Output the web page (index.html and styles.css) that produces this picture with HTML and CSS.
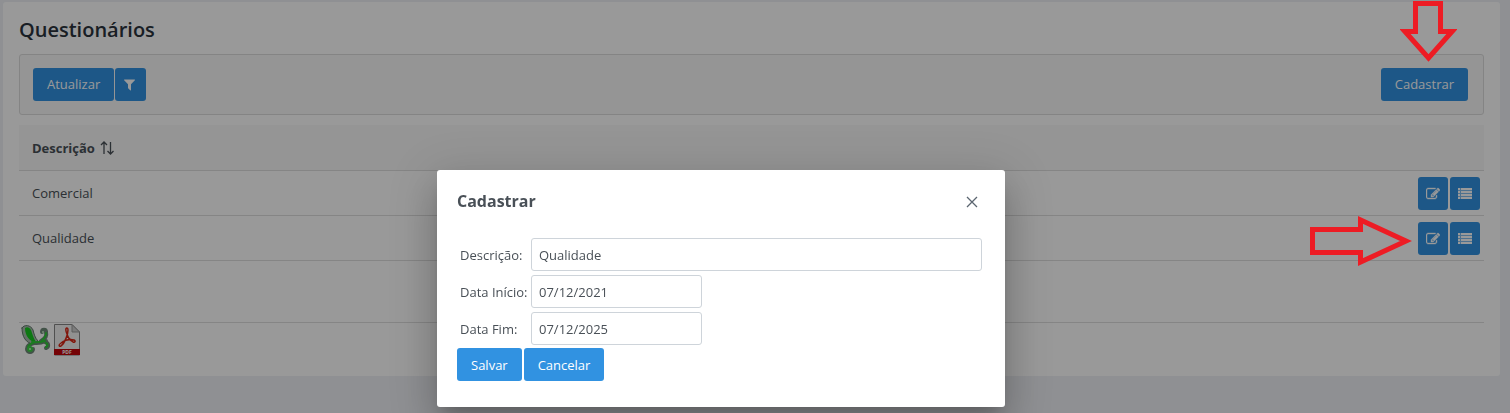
FILE: index.html
```html
<!DOCTYPE html>
<html lang="pt-BR">
<head>
<meta charset="utf-8">
<title>Questionários</title>
<link rel="stylesheet" href="styles.css">
</head>
<body>
<svg class="defs" aria-hidden="true">
  <symbol id="i-edit" viewBox="0 0 1792 1792"><path d="M888 1184l116-116-152-152-116 116v56h96v96h56zm440-720q-16-16-33 1l-350 350q-17 17-1 33t33-1l350-350q17-17 1-33zm80 594v190q0 119-84.500 203.500t-203.500 84.500h-832q-119 0-203.500-84.500t-84.500-203.500v-832q0-119 84.500-203.500t203.500-84.500h832q63 0 117 25 15 7 18 23 3 17-9 29l-49 49q-14 14-32 8-23-6-45-6h-832q-66 0-113 47t-47 113v832q0 66 47 113t113 47h832q66 0 113-47t47-113v-126q0-13 9-22l64-64q15-15 35-7t20 29zm-96-738l288 288-672 672h-288v-288zm444 132l-92 92-288-288 92-92q28-28 68-28t68 28l152 152q28 28 28 68t-28 68z" stroke="#fff" stroke-width="50"/></symbol>
  <symbol id="i-list" viewBox="0 0 14 14"><path d="M0 1h2v2H0zM3 1h11v2H3zM0 4h2v2H0zM3 4h11v2H3zM0 7h2v2H0zM3 7h11v2H3zM0 10h2v2H0zM3 10h11v2H3z"/><path d="M0 1h14v11H0z" opacity=".4"/></symbol>
</svg>

<main class="card">
  <h1 class="page-title">Questionários</h1>
  <div class="toolbar">
    <div class="toolbar-group">
      <button class="btn" type="button">Atualizar</button>
      <button class="btn btn-icon" type="button" aria-label="Filtrar"><svg class="icon" viewBox="192 64 1792 1792"><path d="M1595 295q17 41-14 70l-493 493v742q0 42-39 59-13 5-25 5-27 0-45-19l-256-256q-19-19-19-45v-486l-493-493q-31-29-14-70 17-39 59-39h1280q42 0 59 39z"/></svg></button>
    </div>
    <button class="btn" type="button">Cadastrar</button>
  </div>

  <table class="data">
    <thead>
      <tr>
        <th scope="col"><span class="sort">Descrição
          <svg class="sort-icon" viewBox="0 0 14 14"><path d="M4 13V1M1 4l3-3 3 3M10.500 1v12M7.500 10l3 3 3-3"/></svg></span></th>
        <td></td>
      </tr>
    </thead>
    <tbody>
      <tr>
        <td>Comercial</td>
        <td class="actions-cell"><div class="actions">
          <button class="btn btn-icon" type="button" aria-label="Editar Comercial"><svg class="icon"><use href="#i-edit"/></svg></button>
          <button class="btn btn-icon" type="button" aria-label="Itens de Comercial"><svg class="icon"><use href="#i-list"/></svg></button>
        </div></td>
      </tr>
      <tr>
        <td>Qualidade</td>
        <td class="actions-cell"><div class="actions">
          <button class="btn btn-icon" type="button" aria-label="Editar Qualidade"><svg class="icon"><use href="#i-edit"/></svg></button>
          <button class="btn btn-icon" type="button" aria-label="Itens de Qualidade"><svg class="icon"><use href="#i-list"/></svg></button>
        </div></td>
      </tr>
    </tbody>
  </table>
  <div class="paginator"></div>

  <div class="exports">
    <a href="#" aria-label="Exportar Excel"><svg class="export-icon" viewBox="0 0 32 34">
      <g fill="none" stroke-linecap="round" stroke-linejoin="round">
        <path d="M12 19c5 2 10 1 15-1M22 18c4-2 6-5 5-9 0-3-4-3-4 0M26 19c4 1 4 5 1 6M15 20c-4 1-7 3-7 6 0 4 6 4 6 0" stroke="#6f8a79" stroke-width="4"/>
        <path d="M3 5c2-4 9-3 11 2 1 4 2 8 5 11l-5 3C7 20 3 14 3 5z" fill="#a9bdb0" stroke="#5f7a6a"/>
        <path d="M6 5c3-2 6 0 7 5 1 3 2 6 4 9-6 0-11-6-11-14z" fill="#16c81e"/>
        <path d="M13 19c5 1 9 0 13-1M23 17c3-2 4-4 4-7M27 20c2 1 2 3 0 4M14 20c-3 1-5 3-5 5" stroke="#2fcb38" stroke-width="2"/>
        <circle cx="11" cy="26" r="3" fill="#3ed247"/><circle cx="24" cy="9" r="1" fill="#c2e6c5"/>
        <circle cx="11" cy="26" r="1" fill="#c9f2cb"/>
      </g></svg></a>
    <a href="#" aria-label="Exportar PDF"><svg class="export-icon" viewBox="0 0 32 34">
      <path d="M2.500 1.500H20l7.500 7.500v23h-25z" fill="#f2f2f2" stroke="#858585"/>
      <path d="M20 1.500V9h7.500z" fill="#cfcfcf" stroke="#9a9a9a"/>
      <path d="M2 26h26v6H2z" fill="#c4060b"/>
      <path d="M15 5c-2 0-1 4 0 6 1 4 3 6 6 8 2 1 3-1 1-2-4-1-9 0-13 3-3 2-2 4 0 3 4-3 7-12 7-16 0-1 0-2-1-2z" fill="none" stroke="#d82514" stroke-width="1.500"/>
      <text class="pdf-label" x="15" y="31" text-anchor="middle">PDF</text></svg></a>
  </div>
</main>

<div class="overlay"></div>

<section class="dialog" role="dialog" aria-labelledby="dialog-title">
  <header class="dialog-head">
    <h2 class="dialog-title" id="dialog-title">Cadastrar</h2>
    <button class="close" type="button" aria-label="Fechar"><svg class="close-icon" viewBox="0 0 12 12"><path d="M1 1l10 10M11 1L1 11"/></svg></button>
  </header>
  <form>
    <div class="fields">
      <label for="descricao">Descrição:</label>
      <input class="field" id="descricao" type="text" value="Qualidade">
      <label for="inicio">Data Início:</label>
      <input class="field field-date" id="inicio" type="text" value="07/12/2021">
      <label for="fim">Data Fim:</label>
      <input class="field field-date" id="fim" type="text" value="07/12/2025">
    </div>
    <div class="form-actions">
      <button class="btn" type="button">Salvar</button>
      <button class="btn" type="button">Cancelar</button>
    </div>
  </form>
</section>

<svg class="arrow arrow-down" viewBox="0 0 57 63" aria-hidden="true"><path d="M15.500 3.500h25v28H52L28.500 58 5 31.500h10.500z"/></svg>
<svg class="arrow arrow-right" viewBox="0 0 103 52" aria-hidden="true"><path d="M3.500 14.500h48V5L97 26 51.500 47V37.500h-48z"/></svg>
</body>
</html>
```
FILE: styles.css
```css
* { box-sizing: border-box; }

body {
  margin: 0;
  min-height: 100vh;
  padding: 2px 10px 0 3px;
  overflow: hidden;
  position: relative;
  background: #eef1f6;
  color: #495057;
  font: 13px/18px "Open Sans", "Noto Sans", sans-serif;
}

.defs { position: absolute; width: 0; height: 0; }

.card {
  padding: 16px 16px 19px;
  background: #fff;
  border-radius: 3px;
}

.page-title {
  margin: 0 0 12px;
  color: #2b333c;
  font-size: 20px;
  line-height: 24px;
  font-weight: 600;
}

.toolbar {
  display: flex;
  justify-content: space-between;
  align-items: center;
  margin-bottom: 10px;
  padding: 13px 15px 13px 13px;
  background: #f8f8f8;
  border: 1px solid #dcdcdc;
  border-radius: 3px;
}

.toolbar-group { display: flex; gap: 1px; }

.btn {
  display: inline-flex;
  align-items: center;
  justify-content: center;
  height: 33px;
  padding: 0 14px 1px;
  border: 0;
  border-radius: 3px;
  background: #3192e1;
  color: #fff;
  font: inherit;
}

.btn-icon { width: 31px; padding: 0; }

.icon { width: 14px; height: 14px; fill: #fff; }

.data { width: 100%; border-collapse: collapse; }

.data th,
.data td {
  height: 45px;
  padding: 0 4px 0 13px;
  border-bottom: 1px solid #dedede;
  text-align: left;
}

.data thead { background: #f8f8f8; }

.data th { padding-top: 2px; font-weight: 700; }

.data .actions-cell { padding-top: 2px; }

.sort { display: flex; align-items: center; gap: 5px; }

.sort-icon {
  width: 14px;
  height: 14px;
  fill: none;
  stroke: #495057;
  stroke-width: 1.300;
}

.actions { display: flex; justify-content: flex-end; gap: 2px; }

.actions .btn { width: 30px; }

.paginator { height: 62px; border-bottom: 1px solid #dedede; }

.exports { display: flex; gap: 1px; }

.exports a { display: flex; }

.export-icon { width: 32px; height: 34px; }

.pdf-label { fill: #fff; font-size: 5px; font-weight: 700; }

.overlay { position: fixed; inset: 0; background: rgba(0, 0, 0, 0.4); }

.dialog {
  position: absolute;
  top: 170px;
  left: 437px;
  width: 568px;
  padding: 19px 20px 26px;
  background: #fff;
  border-radius: 3px;
  box-shadow: 0 11px 15px -7px rgba(0, 0, 0, 0.2), 0 24px 38px 3px rgba(0, 0, 0, 0.14), 0 9px 46px 8px rgba(0, 0, 0, 0.12);
}

.dialog-head {
  display: flex;
  justify-content: space-between;
  align-items: center;
  margin-bottom: 25px;
}

.dialog-title { margin: 0; font-size: 16px; line-height: 24px; font-weight: 700; }

.close {
  display: flex;
  align-items: center;
  justify-content: center;
  width: 26px;
  height: 24px;
  padding: 2px 0 0;
  border: 0;
  background: none;
}

.close-icon { width: 12px; height: 12px; fill: none; stroke: #5b6570; stroke-width: 1.300; }

.fields {
  display: grid;
  grid-template-columns: 68px 1fr;
  gap: 4px 3px;
  align-items: center;
  padding: 0 3px;
}

.fields label { white-space: nowrap; }

.field {
  width: 100%;
  height: 33px;
  padding: 0 7px;
  border: 1px solid #ced4da;
  border-radius: 3px;
  background: #fff;
  color: #495057;
  font: inherit;
}

.field-date { width: 171px; }

.form-actions { display: flex; gap: 2px; margin-top: 3px; }

.form-actions .btn { padding-bottom: 0; }

.arrow { position: absolute; fill: none; stroke: #ed1c24; stroke-width: 5; }

.arrow-down { top: 0; right: 53px; width: 57px; height: 63px; }

.arrow-right { top: 215px; right: 98px; width: 103px; height: 52px; }
```
